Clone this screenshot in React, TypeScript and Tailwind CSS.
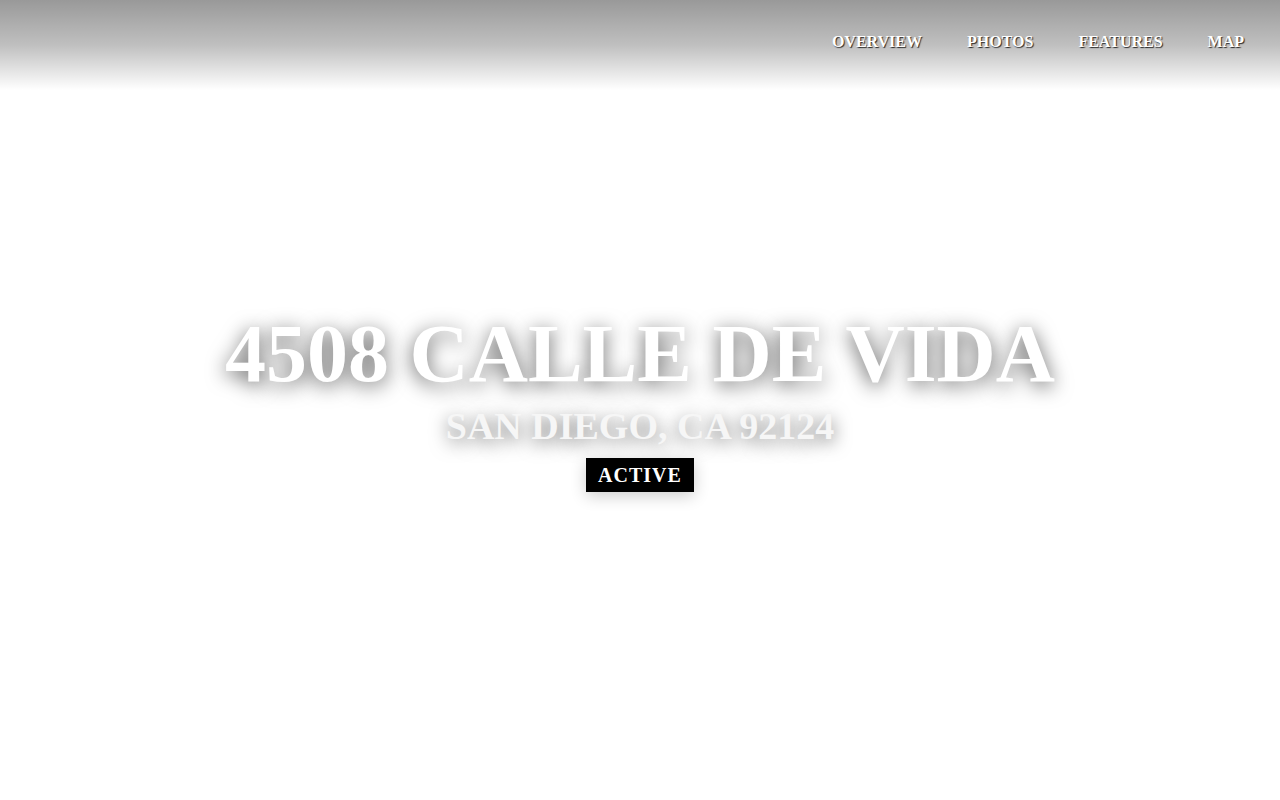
const links = ['Overview', 'Photos', 'Features', 'Map'];

export default function App() {
  return (
    <div className="relative min-h-screen bg-white font-['Liberation_Serif','Times_New_Roman',serif]">
      {/* top nav over the hero */}
      <header className="absolute inset-x-0 top-0 h-[90px] bg-gradient-to-b from-black/40 via-black/25 to-transparent">
        <nav className="flex justify-end gap-[45px] pt-[30px] pr-[36px]">
          {links.map((l) => (
            <a
              key={l}
              href="#"
              className="text-[16px] leading-[24px] font-bold uppercase text-white [text-shadow:1px_1px_1px_rgba(0,0,0,0.8)]"
            >
              {l}
            </a>
          ))}
        </nav>
      </header>

      <section className="flex h-screen flex-col items-center justify-center pt-[4px]">
        <h1 className="text-[82px] leading-[82px] font-bold uppercase text-white [text-shadow:0_4px_20px_rgba(0,0,0,0.65)]">
          4508 Calle de Vida
        </h1>
        <h2 className="mt-[9px] text-[38px] leading-[44px] font-bold uppercase text-[#f6f6f6] [text-shadow:0_4px_18px_rgba(0,0,0,0.6)]">
          San Diego, CA 92124
        </h2>
        <span className="mt-[10px] bg-black px-[12px] py-[7px] text-[20px] leading-[20px] font-bold uppercase tracking-[1px] text-white shadow-[0_4px_16px_rgba(0,0,0,0.2)]">
          Active
        </span>
      </section>
    </div>
  );
}
